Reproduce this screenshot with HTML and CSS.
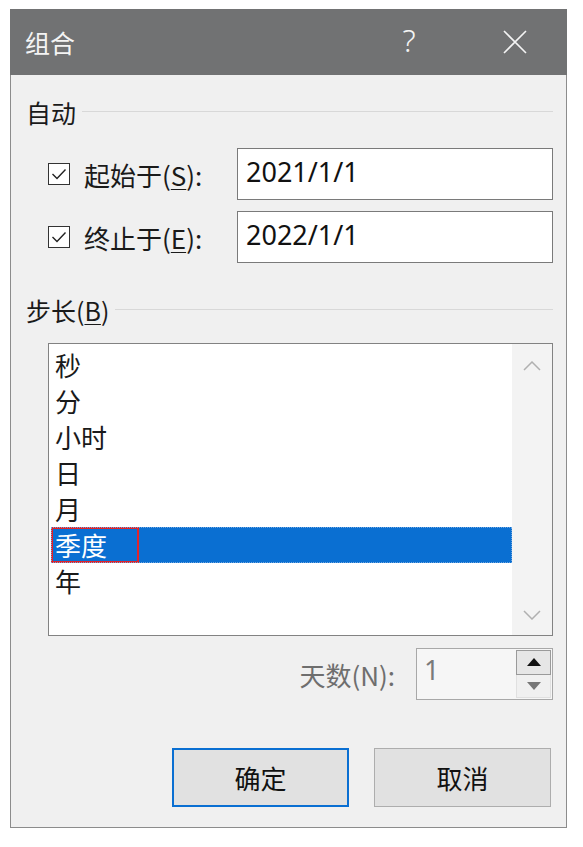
FILE: index.html
```html
<!DOCTYPE html>
<html lang="zh-CN">
<head>
<meta charset="utf-8">
<title>组合</title>
<link rel="stylesheet" href="styles.css">
</head>
<body>
<div class="dialog">
  <div class="titlebar">
    <span class="title">组合</span>
    <span class="help">?</span>
    <span class="close">
      <svg width="24" height="24" viewBox="0 0 24 24"><path d="M1 1 L23 23 M23 1 L1 23" stroke="#f4f4f4" stroke-width="1.6" fill="none"/></svg>
    </span>
  </div>
  <div class="body">
    <div class="group-head"><span>自动</span><span class="rule"></span></div>
    <div class="field-row">
      <div class="check">
        <span class="box"><svg width="16" height="12" viewBox="0 0 16 12"><path d="M1.5 6 L6 10.5 L14.5 1.5" stroke="#222" stroke-width="1.4" fill="none"/></svg></span>
        <span class="label">起始于(<u>S</u>):</span>
      </div>
      <div class="input">2021/1/1</div>
    </div>
    <div class="field-row second">
      <div class="check">
        <span class="box"><svg width="16" height="12" viewBox="0 0 16 12"><path d="M1.5 6 L6 10.5 L14.5 1.5" stroke="#222" stroke-width="1.4" fill="none"/></svg></span>
        <span class="label">终止于(<u>E</u>):</span>
      </div>
      <div class="input">2022/1/1</div>
    </div>
    <div class="group-head step"><span>步长(<u>B</u>)</span><span class="rule"></span></div>
    <div class="listbox">
      <ul class="items">
        <li>秒</li>
        <li>分</li>
        <li>小时</li>
        <li>日</li>
        <li>月</li>
        <li class="selected"><span class="mark">季度</span></li>
        <li>年</li>
      </ul>
      <div class="scroll">
        <svg width="18" height="10" viewBox="0 0 18 10"><path d="M1 9 L9 1 L17 9" stroke="#b0b0b0" stroke-width="1.5" fill="none"/></svg>
        <svg width="18" height="10" viewBox="0 0 18 10"><path d="M1 1 L9 9 L17 1" stroke="#b0b0b0" stroke-width="1.5" fill="none"/></svg>
      </div>
    </div>
    <div class="spin-row">
      <span class="spin-label">天数(N):</span>
      <div class="spin">
        <span class="spin-val">1</span>
        <div class="spin-btns">
          <span class="spin-btn up"><svg width="14" height="8" viewBox="0 0 14 8"><path d="M0 8 L7 0 L14 8 Z" fill="#111"/></svg></span>
          <span class="spin-btn down"><svg width="14" height="8" viewBox="0 0 14 8"><path d="M0 0 L7 8 L14 0 Z" fill="#777"/></svg></span>
        </div>
      </div>
    </div>
    <div class="buttons">
      <button class="btn primary">确定</button>
      <button class="btn">取消</button>
    </div>
  </div>
</div>
</body>
</html>
```
FILE: styles.css
```css
html, body {
  margin: 0;
  padding: 0;
  background: #ffffff;
}
body {
  font-family: "Noto Sans CJK SC", "Noto Sans", sans-serif;
  color: #1a1a1a;
}
.dialog {
  margin: 9px 0 0 10px;
  width: 557px;
  box-sizing: border-box;
  background: #f0f0f0;
  border: 1px solid #8c8c8c;
  border-top: none;
}
.titlebar {
  height: 66px;
  background: #717273;
  display: flex;
  align-items: center;
  padding-left: 15px;
  color: #f4f4f4;
  margin: 0 -1px;
}
.title {
  font-size: 25px;
  flex: 1;
  line-height: 1;
}
.help {
  font-family: "Noto Sans", sans-serif;
  font-weight: 300;
  font-size: 31px;
  width: 20px;
  text-align: center;
  margin-right: 84px;
  line-height: 1;
  margin-top: -4px;
}
.close {
  display: flex;
  margin-right: 40px;
}
.body {
  padding: 19px 13px 20px 15px;
}
.group-head {
  display: flex;
  align-items: center;
  height: 36px;
  font-size: 25px;
  line-height: 36px;
}
.group-head .rule {
  flex: 1;
  height: 1px;
  background: #d8d8d8;
  margin-left: 6px;
  margin-top: -2px;
}
.group-head.step {
  margin-top: 29px;
}
.group-head u, .label u {
  text-decoration-thickness: 1px;
  text-underline-offset: 3px;
}
.field-row {
  display: flex;
  align-items: center;
  margin-top: 18px;
}
.field-row.second {
  margin-top: 11px;
}
.check {
  width: 211px;
  padding-left: 22px;
  box-sizing: border-box;
  display: flex;
  align-items: center;
  font-size: 26px;
}
.box {
  width: 20px;
  height: 20px;
  border: 1px solid #333;
  background: #fff;
  display: flex;
  align-items: center;
  justify-content: center;
  margin-right: 14px;
  flex: none;
}
.input {
  flex: 1;
  height: 52px;
  box-sizing: border-box;
  border: 1px solid #7a7a7a;
  background: #fff;
  font-family: "Noto Sans", sans-serif;
  font-size: 27px;
  line-height: 46px;
  padding-left: 8px;
  color: #111;
}
.listbox {
  margin: 15px 0 0 22px;
  height: 293px;
  box-sizing: border-box;
  border: 1px solid #828282;
  background: #fff;
  display: flex;
}
.items {
  list-style: none;
  margin: 0;
  padding: 3px 0 0 2px;
  flex: 1;
}
.items li {
  height: 36px;
  line-height: 36px;
  font-size: 26px;
  padding-left: 4px;
}
.items li.selected {
  background: #0a6fd2;
  color: #fff;
  padding-left: 0;
  outline: 1px dotted #6ea6e0;
  outline-offset: -1px;
}
.mark {
  display: inline-block;
  width: 88px;
  height: 36px;
  box-sizing: border-box;
  border: 2px solid #e0242a;
  padding-left: 2px;
  line-height: 31px;
}
.scroll {
  width: 40px;
  background: #f3f3f3;
  display: flex;
  flex-direction: column;
  justify-content: space-between;
  align-items: center;
  padding: 17px 0 15px;
}
.spin-row {
  display: flex;
  justify-content: flex-end;
  align-items: center;
  margin-top: 12px;
}
.spin-label {
  font-size: 26px;
  color: #6e6e6e;
  margin-right: 21px;
}
.spin {
  width: 137px;
  height: 52px;
  box-sizing: border-box;
  border: 1px solid #a8a8a8;
  background: #f6f6f6;
  display: flex;
  align-items: stretch;
}
.spin-val {
  flex: 1;
  font-family: "Noto Sans", sans-serif;
  font-size: 27px;
  color: #7a7a7a;
  padding-left: 7px;
  line-height: 42px;
}
.spin-btns {
  width: 35px;
  display: flex;
  flex-direction: column;
  padding: 1px 1px 1px 0;
}
.spin-btn {
  flex: 1;
  display: flex;
  align-items: center;
  justify-content: center;
  box-sizing: border-box;
}
.spin-btn.up {
  background: #e6e6e6;
  border: 1px solid #9a9a9a;
}
.spin-btn.down {
  background: #f0f0f0;
  border: 1px solid #e0e0e0;
  border-top: none;
}
.buttons {
  display: flex;
  justify-content: flex-end;
  gap: 25px;
  margin-top: 48px;
  padding-right: 2px;
}
.btn {
  width: 177px;
  height: 59px;
  box-sizing: border-box;
  border: 1px solid #adadad;
  background: #e1e1e1;
  font-family: "Noto Sans CJK SC", sans-serif;
  font-size: 26px;
  color: #111;
  padding: 0;
}
.btn.primary {
  border: 2px solid #0a6fd2;
}
```
